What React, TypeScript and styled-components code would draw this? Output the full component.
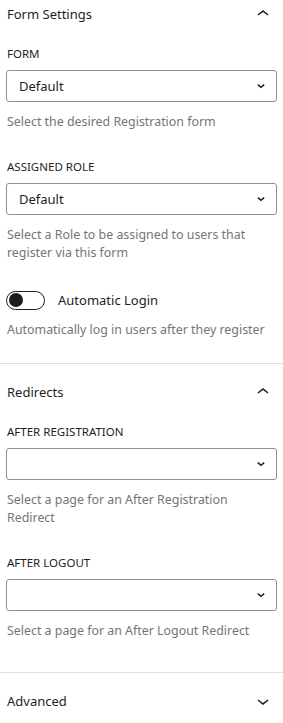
import React from "react";
import styled, { createGlobalStyle } from "styled-components";

const Global = createGlobalStyle`
  html, body { margin: 0; padding: 0; background: #fff; overflow: hidden; }
  body { font-family: "Noto Sans", "Open Sans", sans-serif; color: #1e1e1e; }
  * { box-sizing: border-box; }
`;

const Sidebar = styled.div`
  width: 283px;
  background: #fff;
`;

const Panel = styled.section<{ $last?: boolean }>`
  border-bottom: ${(p) => (p.$last ? "none" : "1px solid #e0e0e0")};
`;

const PanelHeader = styled.div<{ $first?: boolean }>`
  display: flex;
  align-items: center;
  justify-content: space-between;
  height: ${(p) => (p.$first ? "42px" : "56px")};
  padding: ${(p) => (p.$first ? "0 8px 14px 7px" : "0 8px 0 7px")};
  font-size: 13px;
  font-weight: 400;
  color: #1e1e1e;
`;

const PanelBody = styled.div<{ $padBottom: number }>`
  padding: 4px 6px ${(p) => p.$padBottom}px 6px;
`;

const Field = styled.div<{ $last?: boolean }>`
  margin-bottom: ${(p) => (p.$last ? "0" : "28px")};
`;

const Label = styled.div`
  font-size: 11.5px;
  line-height: 16px;
  text-transform: uppercase;
  color: #1e1e1e;
  padding-left: 1px;
  margin-bottom: 8px;
`;

const SelectBox = styled.div`
  height: 32px;
  border: 1px solid #8c8f94;
  border-radius: 3px;
  display: flex;
  align-items: center;
  justify-content: space-between;
  padding: 0 10px 0 12px;
  font-size: 13px;
  color: #1e1e1e;
`;

const Help = styled.p`
  margin: 11px 0 0 0;
  padding-left: 1px;
  font-size: 12.4px;
  line-height: 18px;
  color: #757575;
`;

const ToggleRow = styled.div`
  display: flex;
  align-items: center;
  height: 20px;
  gap: 13px;
  font-size: 13px;
`;

const Track = styled.span`
  position: relative;
  display: inline-block;
  width: 39px;
  height: 19px;
  border: 1.5px solid #1e1e1e;
  border-radius: 10px;
  flex: none;
`;

const Knob = styled.span`
  position: absolute;
  left: 1.5px;
  top: 1px;
  width: 14px;
  height: 14px;
  border-radius: 50%;
  background: #1e1e1e;
`;

const ChevronUp = () => (
  <svg width="24" height="24" viewBox="0 0 24 24" aria-hidden>
    <path d="M6.5 12.4L12 8l5.5 4.4-.9 1.2L12 10l-4.6 3.6-.9-1.2z" fill="#1e1e1e" />
  </svg>
);

const ChevronDown = () => (
  <svg width="24" height="24" viewBox="0 0 24 24" aria-hidden>
    <path d="M17.5 11.6L12 16l-5.5-4.4.9-1.2L12 14l4.6-3.6 1 1.2z" fill="#1e1e1e" />
  </svg>
);

const SmallChevron = () => (
  <svg width="10" height="8" viewBox="0 0 10 8" aria-hidden>
    <path d="M1.8 2.6L5 5.3l3.2-2.7" stroke="#1e1e1e" strokeWidth="1.5" fill="none" />
  </svg>
);

const Select = ({ value }: { value?: string }) => (
  <SelectBox>
    <span>{value ?? ""}</span>
    <SmallChevron />
  </SelectBox>
);

export default function App() {
  return (
    <Sidebar>
      <Global />
      <Panel>
        <PanelHeader $first>
          <span>Form Settings</span>
          <ChevronUp />
        </PanelHeader>
        <PanelBody $padBottom={24}>
          <Field>
            <Label>Form</Label>
            <Select value="Default" />
            <Help>Select the desired Registration form</Help>
          </Field>
          <Field>
            <Label>Assigned Role</Label>
            <Select value="Default" />
            <Help>Select a Role to be assigned to users that register via this form</Help>
          </Field>
          <Field $last>
            <ToggleRow>
              <Track>
                <Knob />
              </Track>
              <span>Automatic Login</span>
            </ToggleRow>
            <Help>Automatically log in users after they register</Help>
          </Field>
        </PanelBody>
      </Panel>
      <Panel>
        <PanelHeader>
          <span>Redirects</span>
          <ChevronUp />
        </PanelHeader>
        <PanelBody $padBottom={32}>
          <Field>
            <Label>After Registration</Label>
            <Select />
            <Help>Select a page for an After Registration Redirect</Help>
          </Field>
          <Field $last>
            <Label>After Logout</Label>
            <Select />
            <Help>Select a page for an After Logout Redirect</Help>
          </Field>
        </PanelBody>
      </Panel>
      <Panel $last>
        <PanelHeader>
          <span>Advanced</span>
          <ChevronDown />
        </PanelHeader>
      </Panel>
    </Sidebar>
  );
}
